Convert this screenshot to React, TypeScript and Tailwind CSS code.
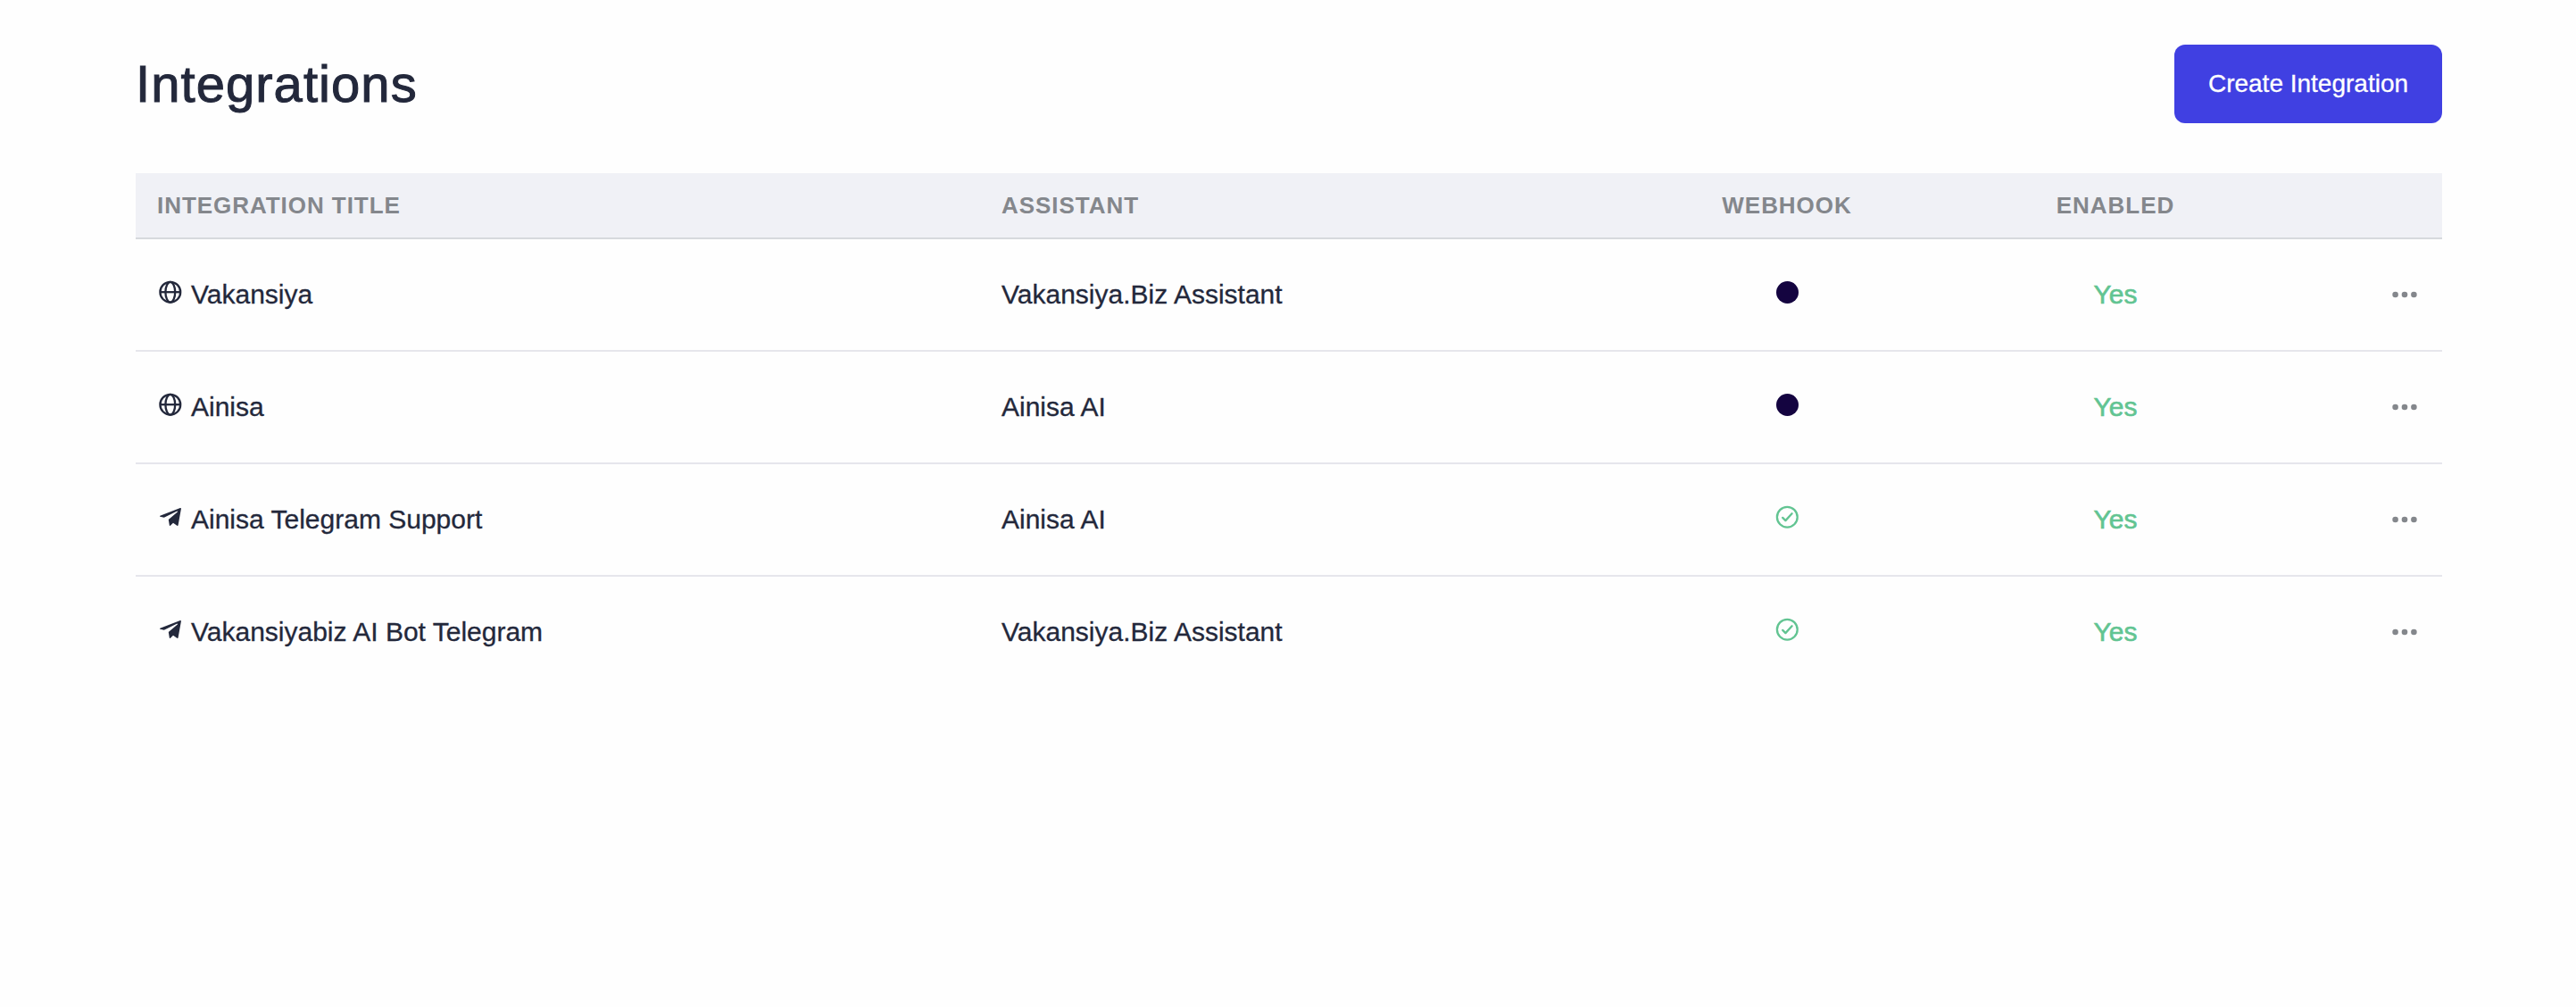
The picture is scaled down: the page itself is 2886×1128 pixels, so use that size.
type Row = { title: string; assistant: string; kind: "web" | "telegram" };

const rows: Row[] = [
  { title: "Vakansiya", assistant: "Vakansiya.Biz Assistant", kind: "web" },
  { title: "Ainisa", assistant: "Ainisa AI", kind: "web" },
  { title: "Ainisa Telegram Support", assistant: "Ainisa AI", kind: "telegram" },
  { title: "Vakansiyabiz AI Bot Telegram", assistant: "Vakansiya.Biz Assistant", kind: "telegram" },
];

function Globe() {
  return (
    <svg viewBox="0 0 30 30" className="size-[30px]" fill="none" stroke="currentColor" strokeWidth="2.3">
      <circle cx="14.8" cy="15.2" r="11.4" />
      <ellipse cx="14.8" cy="15.2" rx="5.4" ry="11.4" />
      <path d="M3.4 15.2h22.8" />
    </svg>
  );
}

function Plane() {
  return (
    <svg viewBox="0 0 30 30" className="size-[30px]" fill="currentColor">
      <path d="M3.3 13.7 25.9 5.1q1.1-.3 1 .8l-3.3 18.4q-.3 1.1-1.3.4L18 21.7l-3.1 3q-.9.7-1.1-.4l-1-6.4 10.3-8.6-.6-.7L7.8 15.8l-4.4-1.1q-.9-.5-.1-1Z" />
    </svg>
  );
}

function CheckCircle() {
  return (
    <svg viewBox="0 0 30 30" className="size-[30px] text-[#62c492]" fill="none" stroke="currentColor" strokeWidth="2.3" strokeLinecap="round" strokeLinejoin="round">
      <circle cx="15.3" cy="15.2" r="11.4" />
      <path d="m10.2 15.9 3.2 3.2 7.2-7.8" />
    </svg>
  );
}

function More() {
  return (
    <svg viewBox="0 0 30 10" className="h-[10px] w-[30px]" fill="#84878c">
      <circle cx="4.6" cy="5" r="3.3" />
      <circle cx="15" cy="5" r="3.3" />
      <circle cx="25.4" cy="5" r="3.3" />
    </svg>
  );
}

export default function App() {
  return (
    <div className="min-h-[1128px] bg-[#fefefe] pt-[50px] pr-[150px] pl-[152px] font-['Liberation_Sans',Arial,sans-serif] text-[30px] leading-9 text-[#23283b] [-webkit-text-stroke:0.3px_currentColor]">
      <header className="flex h-[88px] items-center justify-between">
        <h1 className="text-[58px] leading-[64px] tracking-[1.05px] [-webkit-text-stroke:1px_currentColor]">Integrations</h1>
        <button className="h-[88px] w-[300px] rounded-[12px] bg-[#4040e2] text-[28px] text-white">Create Integration</button>
      </header>
      <section className="mt-14">
        <div className="grid h-[74px] grid-cols-[946px_720px_368px_368px_182px] items-center border-b-2 border-[#d7d9dd] bg-[#f0f1f6] text-[26px] font-bold tracking-[0.95px] text-[#84878c] [-webkit-text-stroke:0px]">
          <div className="pl-6">INTEGRATION TITLE</div>
          <div className="pl-6">ASSISTANT</div>
          <div className="text-center">WEBHOOK</div>
          <div className="text-center">ENABLED</div>
          <div />
        </div>
        {rows.map((row, i) => (
          <div
            key={i}
            className="grid h-[126px] grid-cols-[946px_720px_368px_368px_182px] items-center border-b-2 border-[#e6e6ec] last:border-transparent"
          >
            <div className="flex items-center pl-6">
              <span className="mr-2 mb-1.5">{row.kind === "web" ? <Globe /> : <Plane />}</span>
              <span>{row.title}</span>
            </div>
            <div className="pl-6">{row.assistant}</div>
            <div className="flex justify-center pb-1.5">
              {row.kind === "web" ? <span className="size-[25px] rounded-full bg-[#140440]" /> : <CheckCircle />}
            </div>
            <div className="text-center text-[#62c492] [-webkit-text-stroke:0.6px_currentColor]">Yes</div>
            <div className="flex justify-end pr-[27px]">
              <More />
            </div>
          </div>
        ))}
      </section>
    </div>
  );
}
